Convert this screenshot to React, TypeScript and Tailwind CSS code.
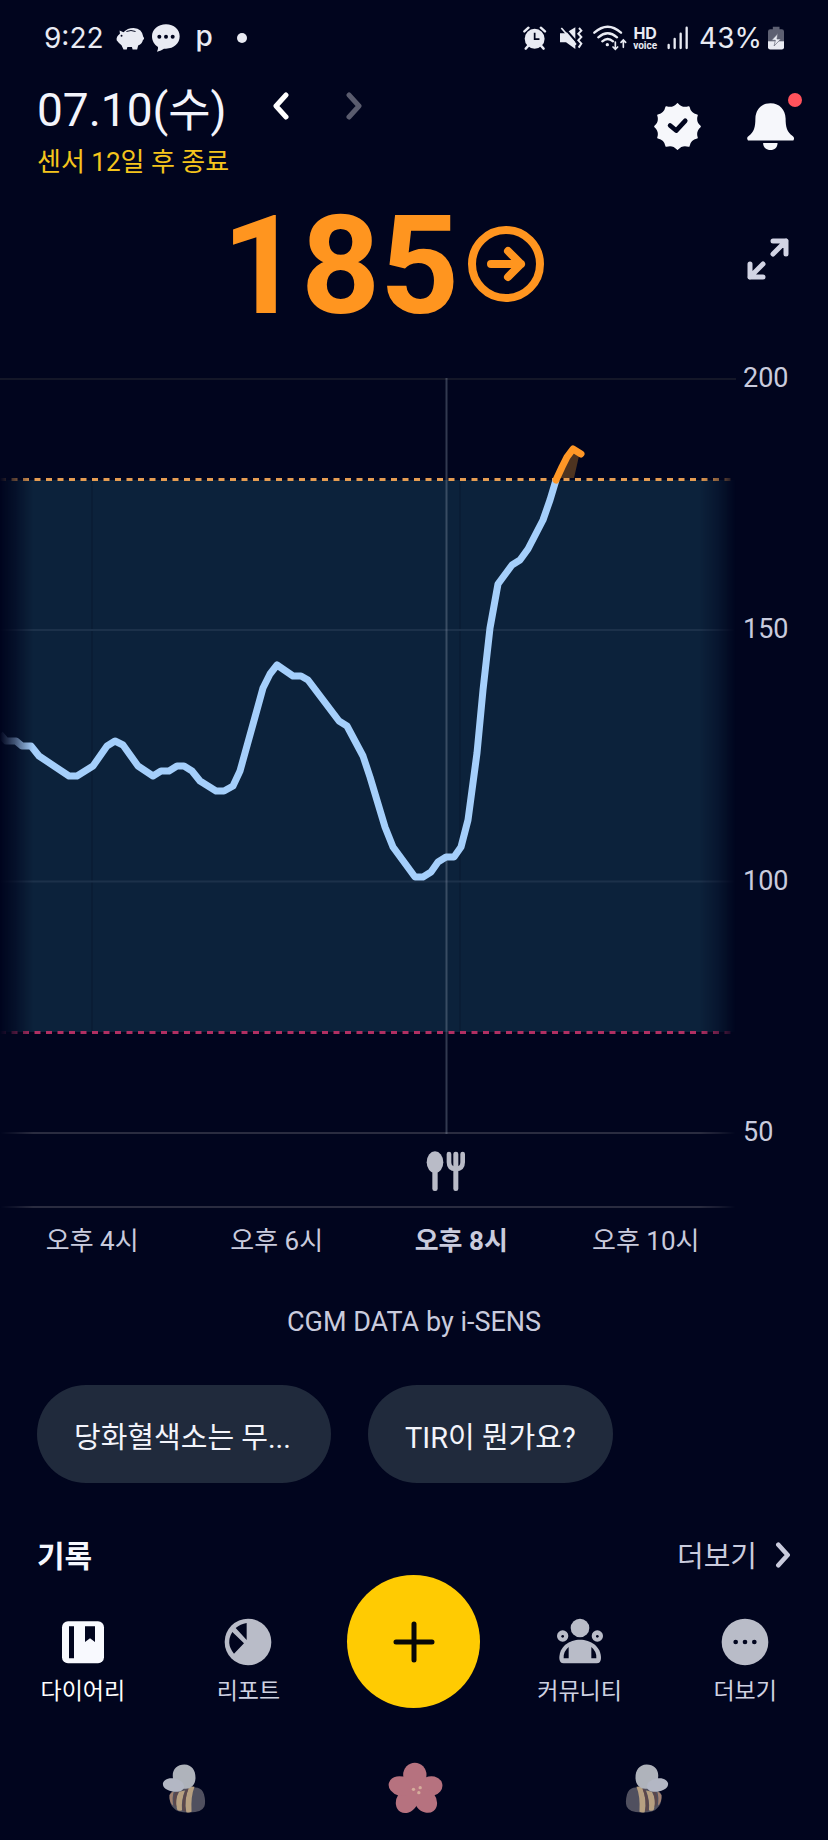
import clsx from 'clsx'
import type { ReactNode } from 'react'

const BACKGROUND = '#01051e'

// [x, y] of each reading, in the units of the chart's view box
const READINGS = [
  [0, 734], [6, 741], [16, 741], [22, 746], [31, 746], [39, 756], [69, 776], [77, 776], [93, 766],
  [107, 746], [115, 741], [123, 745], [138, 766], [153, 776], [161, 771], [169, 771], [177, 766],
  [184, 766], [192, 771], [200, 781], [216, 791], [224, 791], [233, 786], [240, 771], [255, 717],
  [263, 688], [270, 674], [277, 665], [293, 676], [301, 676], [308, 680], [339, 721], [347, 726],
  [363, 756], [370, 777], [385, 827], [393, 847], [415, 877], [423, 877], [431, 872], [438, 862],
  [446, 857], [454, 857], [461, 847], [468, 820], [477, 753], [483, 690], [490, 628], [498, 584],
  [512, 565], [520, 560], [528, 549], [543, 520], [550, 500], [556, 480],
]
const HIGH_READINGS = [[556, 480], [562, 467], [567, 457], [573, 449], [581, 454]]

const Y_LABELS = [200, 150, 100, 50]
const X_LABELS = [
  { label: '오후 4시', active: false },
  { label: '오후 6시', active: false },
  { label: '오후 8시', active: true },
  { label: '오후 10시', active: false },
]
const QUESTIONS = [
  { label: '당화혈색소는 무...', className: 'min-w-[294px]' },
  { label: 'TIR이 뭔가요?', className: '' },
]

const toPoints = (points: number[][]) => points.map(point => point.join(',')).join(' ')

// Badge outline with 12 tips and shallow notches between them
const badgePath = () => {
  const at = (angle: number, radius: number) => {
    const rad = (angle * Math.PI) / 180

    return `${(70 + radius * Math.sin(rad)).toFixed(1)} ${(70 - radius * Math.cos(rad)).toFixed(1)}`
  }
  const edges = Array.from({ length: 12 }, (_, i) => `Q${at(i * 30 + 15, 53)} ${at(i * 30 + 30, 67)}`)

  return `M${at(0, 67)}${edges.join('')}Z`
}

function StatusBar() {
  return (
    <div className="flex h-19 items-center justify-between pl-11 pr-[44px] font-[Inter,sans-serif] text-[28px] leading-9 text-[#e9ebf3]">
      <div className="flex items-center">
        <span>9:22</span>
        <svg className="ml-3 h-6 w-7" viewBox="350 80 86 70" fill="currentColor">
          <path d="M352 122q-2-12 10-20l-1-10 12 5q12-13 31-13 27 2 30 28l2 2v5l-3 1q-2 12-15 18l-3 12h-14l-2-7h-14l-2 7h-10l-6-13q-7-4-15-15z" />
          <path d="M382 95q14-6 28 0" fill="none" stroke={BACKGROUND} strokeWidth="3" />
          <circle cx="367" cy="108" r="3" fill={BACKGROUND} />
        </svg>
        <svg className="ml-2 h-7 w-7" viewBox="458 74 84 84" fill="currentColor">
          <path d="M500 75c24 0 41 15 41 36s-17 37-41 37h-6q-8 6-21 9 4-7 3-14c-11-7-18-18-18-32 0-21 18-36 42-36z" />
          <g fill={BACKGROUND}>
            <circle cx="480" cy="112" r="6" />
            <circle cx="500" cy="112" r="6" />
            <circle cx="520" cy="112" r="6" />
          </g>
        </svg>
        <span className="ml-4 -mt-1 font-medium">p</span>
        <span className="ml-6 h-2.5 w-2.5 rounded-full bg-current" />
      </div>
      <div className="flex items-center">
        <svg className="h-6 w-6" viewBox="330 80 70 70" fill="currentColor">
          <circle cx="364" cy="117" r="29" />
          <path d="M334 96l12-11M394 96l-12-11M345 138l-7 8M383 138l7 8" stroke="currentColor" strokeWidth="7" strokeLinecap="round" />
          <path d="M364 100v18h14" fill="none" stroke={BACKGROUND} strokeWidth="5" />
        </svg>
        <svg className="ml-3 h-6 w-6" viewBox="434 78 70 72" fill="currentColor">
          <path d="M436 100h16l30-18v65l-28-20h-18z" />
          <path d="M446 80l40 46" stroke={BACKGROUND} strokeWidth="6" />
          <path d="M440 84l44 50" stroke="currentColor" strokeWidth="5" />
          <path d="M493 84l7 8-9 9 9 10-9 10 9 10-8 12" fill="none" stroke="currentColor" strokeWidth="6" />
        </svg>
        <svg className="ml-2.5 h-7 w-[34px]" viewBox="534 72 102 84" fill="none" stroke="currentColor" strokeWidth="7" strokeLinecap="round">
          <path d="M538 98q40-36 80 0M550 112q28-24 56 0M562 124q16-14 32 0" />
          <circle cx="577" cy="134" r="5" fill="currentColor" stroke="none" />
          <path d="M601 126v22m-7-7l7 7 7-7M625 142v-22m-7 7l7-7 7 7" strokeWidth="5" />
        </svg>
        <span className="ml-1.5 flex flex-col items-center font-bold">
          <span className="text-[16px] leading-4">HD</span>
          <span className="font-[Roboto,sans-serif] text-[10px] leading-2.5">voice</span>
        </span>
        <svg className="ml-2.5 h-6 w-[22px]" viewBox="758 80 66 70" fill="none" stroke="currentColor" strokeWidth="7" strokeLinecap="round">
          <path d="M763 136v9M781 118v27M799 102v43M817 84v61" />
        </svg>
        <span className="ml-2.5">43%</span>
        <svg className="ml-1.5 h-6 w-4" viewBox="1061 77 50 74">
          <path d="M1076 79h21v8h7q7 0 7 7v32h-50V94q0-7 7-7h8z" fill="#5d6072" />
          <path d="M1061 124h50v19q0 7-7 7h-36q-7 0-7-7z" fill="currentColor" />
          <path d="M1092 100l-20 21h12l-4 18 21-22h-12z" fill="currentColor" stroke="#5d6072" strokeWidth="2" />
        </svg>
      </div>
    </div>
  )
}

function Chevron({ direction, className }: { direction: 'left' | 'right'; className?: string }) {
  return (
    <svg className={className} viewBox="0 0 16 28" fill="none" stroke="currentColor" strokeWidth="5" strokeLinecap="round" strokeLinejoin="round">
      <path d={direction === 'left' ? 'M13 3L3 14l10 11' : 'M3 3l10 11L3 25'} />
    </svg>
  )
}

function Header() {
  return (
    <header className="flex items-center justify-between pl-[37px] pr-[34px] pt-1.5">
      <div>
        <div className="flex items-center">
          <h1 className="text-[46px] leading-14 text-[#f3f4fb]">07.10(수)</h1>
          <button type="button" aria-label="이전 날짜" className="ml-[46px] pb-2">
            <Chevron direction="left" className="h-7 w-4" />
          </button>
          <button type="button" aria-label="다음 날짜" className="ml-[57px] pb-2 text-[#5a5c6e]">
            <Chevron direction="right" className="h-7 w-4" />
          </button>
        </div>
        <p className="mt-2 text-[26px] leading-8 text-[#f5c41c]">센서 12일 후 종료</p>
      </div>
      <div className="flex items-center gap-[46px] pb-2 text-[#f6f7fb]">
        <button type="button" aria-label="인증">
          <svg className="h-[47px] w-[47px]" viewBox="0 0 140 140">
            <path d={badgePath()} fill="currentColor" stroke="currentColor" strokeWidth="5" strokeLinejoin="round" />
            <path d="M48 67l18 15 27-29" fill="none" stroke={BACKGROUND} strokeWidth="14" strokeLinecap="round" strokeLinejoin="round" />
          </svg>
        </button>
        <button type="button" aria-label="알림" className="relative">
          <svg className="h-[47px] w-[47px]" viewBox="1000 307 140 140" fill="currentColor">
            <path d="M1070 308c28 0 44 20 45 45 0 26 4 40 21 52q7 5 2 14h-135q-6-9 2-14c16-12 20-26 20-52 1-25 17-45 45-45z" />
            <path d="M1048 426h43c0 13-9 21-21 21s-22-8-22-21z" />
          </svg>
          <span className="absolute -right-2 -top-2.5 h-3.5 w-3.5 rounded-full bg-[#ff525c]" />
        </button>
      </div>
    </header>
  )
}

function CurrentLevel() {
  return (
    <section className="flex h-[172px] items-center pr-[39px]">
      <div className="flex flex-1 items-center justify-center pl-5 text-[#ff951f]">
        <span className="pt-1 text-[138px] font-bold leading-[140px]">185</span>
        <svg className="ml-2 h-[78px] w-[78px]" viewBox="0 0 78 78" fill="none" stroke="currentColor" strokeWidth="8" strokeLinecap="round" strokeLinejoin="round">
          <circle cx="39" cy="39" r="34" />
          <path d="M24 39h30M41 26l13 13-13 13" />
        </svg>
      </div>
      <button type="button" aria-label="전체 화면" className="pb-2.5 text-[#d2d4e4]">
        <svg className="h-[42px] w-[42px]" viewBox="0 0 42 42" fill="none" stroke="currentColor" strokeWidth="5" strokeLinecap="round" strokeLinejoin="round">
          <path d="M26 3h13v13M39 3L26 16M3 26v13h13M3 39l13-13" />
        </svg>
      </button>
    </section>
  )
}

function GlucoseChart() {
  return (
    <section className="mt-3">
      <div className="flex">
        <svg className="h-auto min-w-0 flex-1" viewBox="0 362 736 848" role="img" aria-label="혈당 그래프">
          <defs>
            <linearGradient id="fade" gradientUnits="userSpaceOnUse" x1="0" y1="0" x2="736" y2="0">
              <stop offset="0" stopColor="#fff" stopOpacity="0" />
              <stop offset="0.02" stopColor="#fff" stopOpacity="0.4" />
              <stop offset="0.045" stopColor="#fff" />
              <stop offset="0.95" stopColor="#fff" />
              <stop offset="0.975" stopColor="#fff" stopOpacity="0.6" />
              <stop offset="1" stopColor="#fff" stopOpacity="0" />
            </linearGradient>
            <mask id="edges" maskUnits="userSpaceOnUse" x="0" y="362" width="736" height="848">
              <rect x="0" y="362" width="736" height="848" fill="url(#fade)" />
            </mask>
          </defs>
          <path d="M0 379H736" stroke="#141728" strokeWidth="2" />
          <g mask="url(#edges)">
            <rect x="0" y="480" width="736" height="552" fill="#0c223b" />
            <path d="M92 480V1032M460 480V1032" stroke="#0a1d35" strokeWidth="2" />
            <path d="M0 630H736M0 881.5H736" stroke="#1c314a" strokeWidth="2" />
            <path d="M0 1133H736M0 1207H736" stroke="#2a2c40" strokeWidth="2" />
            <path d="M0 479.5H736" stroke="#e59c52" strokeWidth="3" strokeDasharray="6 5.5" />
            <path d="M0 1032.500H736" stroke="#b02f62" strokeWidth="3" strokeDasharray="6 5.5" />
            <path d="M446.5 378V1134" stroke="#8f9ab0" strokeOpacity="0.35" strokeWidth="2" />
            <path d="M557 478L573 449L579 456L574 478Z" fill="#4d3320" />
            <g fill="none" strokeWidth="7" strokeLinejoin="round">
              <polyline points={toPoints(READINGS)} stroke="#a5cffb" />
              <polyline points={toPoints(HIGH_READINGS)} stroke="#ff9726" strokeLinecap="round" />
            </g>
          </g>
          <g transform="translate(380 1000) scale(0.3333)" fill="#b9bbc7">
            <ellipse cx="165" cy="487" rx="25" ry="33" />
            <rect x="157" y="500" width="16" height="73" rx="7" />
            <rect x="220" y="455" width="15" height="118" rx="7" />
            <path d="M207 462v25q0 20 20.500 20t20.500-20v-25" fill="none" stroke="#b9bbc7" strokeWidth="14" strokeLinecap="round" />
          </g>
        </svg>
        <div className="flex w-[92px] flex-col justify-between pb-[62px] pl-[7px] text-[27px] leading-8">
          {Y_LABELS.map(label => (
            <span key={label}>{label}</span>
          ))}
        </div>
      </div>
      <div className="mr-[90px] mt-[15px] grid grid-cols-4 text-center text-[26px] leading-8">
        {X_LABELS.map(({ label, active }) => (
          <span key={label} className={clsx(active && 'font-bold')}>
            {label}
          </span>
        ))}
      </div>
    </section>
  )
}

function NavItem({ label, active, children }: { label: string; active?: boolean; children: ReactNode }) {
  return (
    <button type="button" className={clsx('flex flex-1 flex-col items-center gap-2.5', active ? 'text-white' : 'text-[#d0d2e2]')}>
      <span className={active ? 'text-[#f8f9fe]' : 'text-[#b9bcc8]'}>{children}</span>
      <span className="text-[23px] leading-8">{label}</span>
    </button>
  )
}

function BottomNav() {
  return (
    <nav className="flex items-end">
      <NavItem label="다이어리" active>
        <svg className="h-12 w-12" viewBox="177 170 144 144" fill="currentColor">
          <rect x="186" y="180" width="126" height="126" rx="18" />
          <path d="M207 195h15v96h-15zM255 195h30v47l-15-11-15 11z" fill={BACKGROUND} />
        </svg>
      </NavItem>
      <NavItem label="리포트">
        <svg className="h-12 w-12" viewBox="673 170 144 144" fill="currentColor">
          <circle cx="745" cy="242" r="70" />
          <path d="M741 185v51l-33-36q14-12 33-15zM698 212l35 34-30 31q-26-31-5-65z" fill={BACKGROUND} />
        </svg>
      </NavItem>
      <div className="flex flex-1 justify-center">
        <button type="button" aria-label="기록 추가" className="flex h-[133px] w-[133px] items-center justify-center rounded-full bg-[#ffcb02]">
          <svg className="h-[42px] w-[42px]" viewBox="0 0 42 42" stroke="#080808" strokeWidth="5" strokeLinecap="round">
            <path d="M21 3v36M3 21h36" />
          </svg>
        </button>
      </div>
      <NavItem label="커뮤니티">
        <svg className="h-12 w-12" viewBox="425 170 144 144" fill="currentColor">
          <circle cx="497" cy="200" r="28" />
          <circle cx="445" cy="224" r="17" />
          <circle cx="549" cy="224" r="17" />
          <path d="M435 290c0-35 30-55 62-55s63 20 63 55q0 16-13 16h-99q-13 0-13-16z" />
          <g fill={BACKGROUND}>
            <circle cx="445" cy="225" r="4" />
            <circle cx="549" cy="225" r="4" />
            <path d="M463 257v34h-15q-2-20 15-34zM531 257v34h15q2-20-15-34z" />
          </g>
        </svg>
      </NavItem>
      <NavItem label="더보기">
        <svg className="h-12 w-12" viewBox="921 170 144 144" fill="currentColor">
          <circle cx="993" cy="242" r="70" />
          <g fill={BACKGROUND}>
            <circle cx="965" cy="242" r="7" />
            <circle cx="993" cy="242" r="7" />
            <circle cx="1021" cy="242" r="7" />
          </g>
        </svg>
      </NavItem>
    </nav>
  )
}

function Bee({ className }: { className?: string }) {
  return (
    <svg className={clsx('h-[51px] w-11', className)} viewBox="484 604 134 152">
      <path d="M507 700q4-14 24-18 30-10 62-4 14 4 19 20 6 22 1 37-8 18-44 18-38 1-48-12-16-12-14-41z" fill="#50505f" />
      <path d="M507 700q5-9 13-12-6 18-2 44-13-10-11-32z" fill="#a08171" />
      <path d="M536 690l18-4q-12 30-9 60-10 4-15-2-8-30 6-54zM565 678q10-7 18-3-12 30-9 76-8 4-16 1-8-34 7-74z" fill="#b7a081" />
      <path d="M526 690l9-3q-12 22-7 49l-6-4q-6-24 4-42zM557 684l8-4q-14 34-9 70l-9-3q-4-34 10-63z" fill="#5c474b" />
      <path d="M518 652c-6-28 10-45 34-45 24 1 34 18 34 40 0 20-12 34-30 34-20 0-34-8-38-29z" fill="#afb3bb" />
      <path d="M487 663c4-12 20-17 38-13 18 5 28 14 26 27-3 12-20 16-38 11-18-4-28-12-26-25z" fill="#b3b7c4" />
    </svg>
  )
}

function SystemNav() {
  return (
    <div className="mt-[52px] grid grid-cols-3 items-center pl-[68px] pr-[65px] pb-6">
      <button type="button" aria-label="최근 앱" className="flex h-14 items-center justify-center">
        <Bee />
      </button>
      <button type="button" aria-label="홈" className="flex h-14 items-center justify-center">
        <svg className="h-13 w-[55px]" viewBox="1164 600 164 156" fill="#b6727f">
          <circle cx="1245" cy="684" r="42" />
          <ellipse cx="1244" cy="639" rx="35" ry="37" />
          <ellipse cx="1291" cy="673" rx="36" ry="30" transform="rotate(-12 1291 673)" />
          <ellipse cx="1276" cy="716" rx="32" ry="39" transform="rotate(-38 1276 716)" />
          <ellipse cx="1221" cy="716" rx="32" ry="39" transform="rotate(32 1221 716)" />
          <ellipse cx="1202" cy="672" rx="37" ry="29" transform="rotate(14 1202 672)" />
          <g fill="#d5ad9b">
            <circle cx="1240" cy="682" r="5" />
            <circle cx="1260" cy="677" r="5" />
            <circle cx="1256" cy="692" r="5" />
          </g>
        </svg>
      </button>
      <button type="button" aria-label="뒤로" className="flex h-14 items-center justify-center">
        <Bee className="-scale-x-100" />
      </button>
    </div>
  )
}

export default function App() {
  return (
    <div className="flex min-h-screen flex-col bg-[#01051e] font-[Roboto,'Noto_Sans_CJK_KR',sans-serif] text-[#c9cbdd]">
      <StatusBar />
      <div className="text-white">
        <Header />
      </div>
      <CurrentLevel />
      <GlucoseChart />
      <p className="mt-[49px] text-center text-[27px] leading-8">CGM DATA by i-SENS</p>
      <div className="mt-[47px] flex gap-[37px] px-[37px]">
        {QUESTIONS.map(({ label, className }) => (
          <button
            key={label}
            type="button"
            className={clsx(
              'h-[98px] rounded-full bg-[#202a3c] px-[37px] pt-2 text-left text-[29px] leading-9 text-[#f3f4fb]',
              className
            )}
          >
            {label}
          </button>
        ))}
      </div>
      <div className="mt-14 flex h-9 items-center justify-between px-[37px]">
        <h2 className="text-[30px] font-bold leading-9 text-[#f6f7fd]">기록</h2>
        <a href="#records" className="flex items-center gap-[18px] text-[29px] leading-9">
          더보기
          <Chevron direction="right" className="mb-1 h-[26px] w-4" />
        </a>
      </div>
      <BottomNav />
      <SystemNav />
    </div>
  )
}
